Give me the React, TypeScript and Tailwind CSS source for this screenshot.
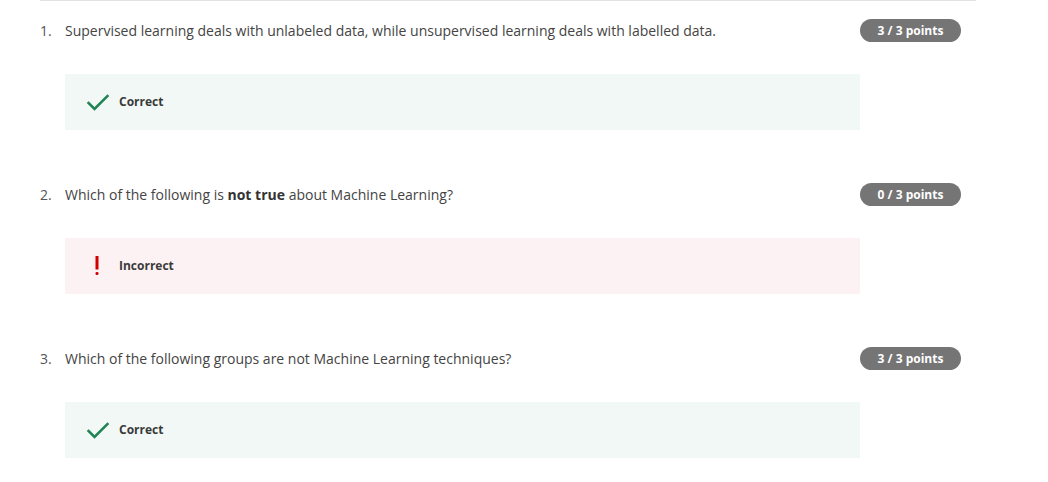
import React from "react";

const font = { fontFamily: '"Open Sans", "Liberation Sans", sans-serif' };

function Check() {
  return (
    <svg width="22" height="17" viewBox="0 0 22 17" className="shrink-0">
      <path d="M1.5 9 L7.5 15 L20.5 2" fill="none" stroke="#1f8354" strokeWidth="2.5" strokeLinecap="square" />
    </svg>
  );
}

function Bang() {
  return (
    <svg width="22" height="20" viewBox="0 0 22 20" className="shrink-0">
      <rect x="8.5" y="0" width="3" height="13.5" fill="#d10000" />
      <rect x="8.5" y="16" width="3" height="3" rx="1.3" fill="#d10000" />
    </svg>
  );
}

type Q = { n: number; text: React.ReactNode; points: string; correct: boolean };

const qs: Q[] = [
  {
    n: 1,
    text: "Supervised learning deals with unlabeled data, while unsupervised learning deals with labelled data.",
    points: "3 / 3 points",
    correct: true,
  },
  {
    n: 2,
    text: (
      <>
        Which of the following is <b className="font-bold text-[#333]">not true</b> about Machine Learning?
      </>
    ),
    points: "0 / 3 points",
    correct: false,
  },
  {
    n: 3,
    text: "Which of the following groups are not Machine Learning techniques?",
    points: "3 / 3 points",
    correct: true,
  },
];

export default function App() {
  return (
    <div className="w-[1048px] h-[482px] bg-white overflow-hidden" style={font}>
      <div className="ml-[40px] w-[936px] border-t border-[#e2e2e2] flex flex-col gap-[35px]">
        {qs.map((q) => (
          <div key={q.n} className="pt-[18px] flex flex-col">
            <div className="flex items-center h-[23px]">
              <div className="w-[820px] flex items-center text-[14px] text-[#444]">
                <span className="w-[25px] text-[#555]">{q.n}.</span>
                <span>{q.text}</span>
              </div>
              <div className="w-[101px] h-[23px] rounded-full bg-[#757575] text-white text-[12px] font-bold flex items-center justify-center">
                {q.points}
              </div>
            </div>
            <div
              className={`mt-[32px] ml-[25px] w-[795px] h-[56px] flex items-center pl-[22px] gap-[10px] ${
                q.correct ? "bg-[#f2f8f5]" : "bg-[#fdf2f3]"
              }`}
            >
              {q.correct ? <Check /> : <Bang />}
              <span className="text-[12px] font-bold text-[#3a3a3a]">{q.correct ? "Correct" : "Incorrect"}</span>
            </div>
          </div>
        ))}
      </div>
    </div>
  );
}
